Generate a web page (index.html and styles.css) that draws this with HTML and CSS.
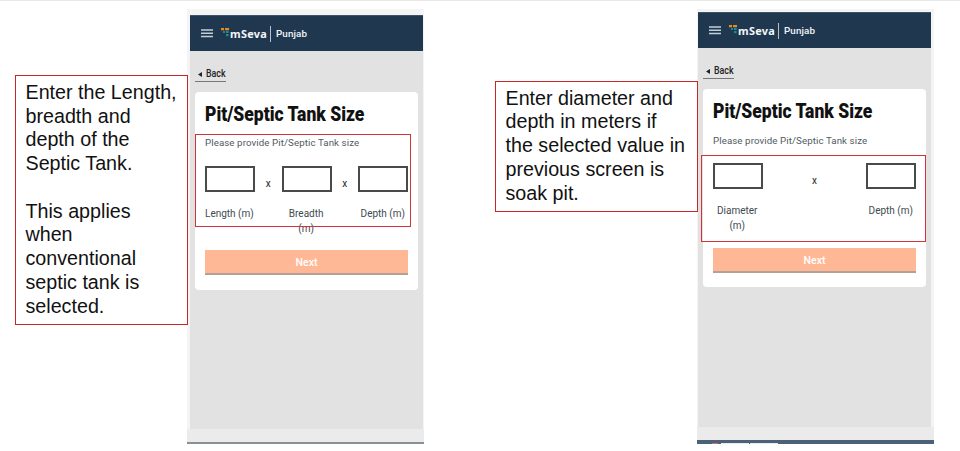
FILE: index.html
```html
<!DOCTYPE html>
<html lang="en">
<head>
<meta charset="utf-8">
<title>Pit/Septic Tank Size</title>
<link rel="stylesheet" href="styles.css">
</head>
<body>
<main class="board">
  <aside class="note note-tank">
    <p>Enter the Length,<br>breadth and<br>depth of the<br>Septic Tank.</p>
    <p>This applies<br>when<br>conventional<br>septic tank is<br>selected.</p>
  </aside>
  <section class="phone phone-tank">
    <header class="bar">
      <svg class="menu" viewBox="0 0 12 9"><path d="M0 1h12M0 4.3h12M0 7.6h12"/></svg>
      <svg class="mark" viewBox="0 0 9 9"><path fill="#e88b16" d="M0 0h3v2.2H0zM4 0h4v2.2H4z"/><path fill="#2386a0" d="M2 3h2v2H2zM5 3h2.6v2H5z"/><path fill="#16956a" d="M5 6h2.6v2.2H5z"/></svg>
      <span class="brand">mSeva</span><span class="state">Punjab</span>
    </header>
    <div class="screen">
      <a class="back"><svg viewBox="0 0 4 5"><path d="M4 0v5L0 2.5z"/></svg><span>Back</span></a>
      <div class="card">
        <h1><span>Pit/Septic Tank Size</span></h1>
        <p class="hint">Please provide Pit/Septic Tank size</p>
        <div class="inputs"><i class="field"></i><b>x</b><i class="field"></i><b>x</b><i class="field"></i></div>
        <div class="labels"><span>Length (m)</span><span>Breadth<br>(m)</span><span>Depth (m)</span></div>
        <div class="next">Next</div>
        <div class="focus"></div>
      </div>
    </div>
    <footer class="base"></footer>
  </section>
  <aside class="note note-pit">
    <p>Enter diameter and<br>depth in meters if<br>the selected value in<br>previous screen is<br>soak pit.</p>
  </aside>
  <section class="phone phone-pit">
    <header class="bar">
      <svg class="menu" viewBox="0 0 12 9"><path d="M0 1h12M0 4.3h12M0 7.6h12"/></svg>
      <svg class="mark" viewBox="0 0 9 9"><path fill="#e88b16" d="M0 0h3v2.2H0zM4 0h4v2.2H4z"/><path fill="#2386a0" d="M2 3h2v2H2zM5 3h2.6v2H5z"/><path fill="#16956a" d="M5 6h2.6v2.2H5z"/></svg>
      <span class="brand">mSeva</span><span class="state">Punjab</span>
    </header>
    <div class="screen">
      <a class="back"><svg viewBox="0 0 4 5"><path d="M4 0v5L0 2.5z"/></svg><span>Back</span></a>
      <div class="card">
        <h1><span>Pit/Septic Tank Size</span></h1>
        <p class="hint">Please provide Pit/Septic Tank size</p>
        <div class="inputs"><i class="field"></i><b>x</b><i class="field"></i></div>
        <div class="labels"><span>Diameter<br>(m)</span><span>Depth (m)</span></div>
        <div class="next">Next</div>
        <div class="focus"></div>
      </div>
    </div>
    <footer class="base"><i class="dot"></i><i class="tab"></i><i class="tab"></i></footer>
  </section>
</main>
</body>
</html>
```

FILE: styles.css
```css
* { box-sizing: border-box; }
body { margin: 0; background: #fff; font-family: Roboto, sans-serif; overflow: hidden; }
p, h1 { margin: 0; }
.board { display: flex; align-items: flex-start; height: 451px; padding-left: 15px; border-top: 1px solid #e9e9e9; }

.note { position: relative; z-index: 1; border: 1px solid #c62828; padding-left: 9.5px; font: 19.7px/23.75px "Liberation Sans", Arial, sans-serif; color: #111; white-space: nowrap; flex: none; }
.note p + p { margin-top: 23.75px; }
.note-tank { width: 173px; height: 250px; margin-top: 74px; padding-top: 4.8px; }
.note-pit { width: 203px; height: 131px; margin: 80px 0 0 71px; padding-top: 4.5px; }

.phone { flex: none; width: 237px; background: #f4f4f4; display: flex; flex-direction: column; }
.phone-tank { height: 435px; margin: 8px 0 0 -1px; padding-top: 6px; }
.phone-pit { height: 435px; margin: 8px 0 0 -1px; padding-top: 3px; }
.bar { width: 233px; height: 36px; margin-left: 3px; background: #1f3850; border-top: 1px solid #3c5369; display: flex; align-items: center; flex: none; color: #f3f6f8; }
.menu { width: 12px; height: 9px; margin-left: 11px; }
.menu path { stroke: #c4ced6; stroke-width: 1.5; }
.mark { width: 9px; height: 9px; margin: -3px 0 0 8px; }
.brand { font: 700 10.9px/16px "Noto Sans", sans-serif; width: 41px; border-right: 1px solid #b4c0ca; letter-spacing: .3px; }
.state { font: 500 9.8px/16px Roboto, sans-serif; margin-left: 5px; letter-spacing: .1px; }
.screen { width: 233px; margin-left: 3px; padding: 16px 5px 0; flex: 1; background: #e2e2e2; display: flex; flex-direction: column; align-items: flex-start; }
.phone-pit .bar, .phone-pit .screen { margin-left: 1px; }

.back { display: flex; align-items: center; height: 15px; width: 31px; padding-left: 3px; border-bottom: 1px solid #777; font: 500 10px/14px Roboto, sans-serif; color: #222; }
.back svg { width: 4px; height: 5px; margin-right: 4px; fill: #222; flex: none; }
.back span { transform: scaleX(.88); transform-origin: left; }

.card { position: relative; width: 223px; height: 198px; margin-top: 10px; padding: 11px 10px 0; background: #fff; border-radius: 4px; }
h1 { height: 22px; font: 900 20px/22px Roboto, sans-serif; color: #111; white-space: nowrap; }
h1 span { display: inline-block; transform: scaleX(.875); transform-origin: left; }
.hint { margin-top: 12px; font-size: 9.7px; line-height: 14px; color: #505a5f; letter-spacing: .1px; white-space: nowrap; }
.inputs { display: flex; justify-content: space-between; align-items: center; margin-top: 15px; height: 26px; }
.field { width: 50px; height: 26px; border: 2px solid #4a4a4a; }
.inputs b { font: 400 10px/12px Roboto, sans-serif; color: #222; padding-top: 10px; }
.labels { display: flex; justify-content: space-between; height: 36px; margin-top: 14px; font-size: 10px; line-height: 15px; color: #404b50; text-align: center; white-space: nowrap; }
.next { margin-top: 8px; height: 25px; background: #ffb896; border-bottom: 2px solid #b6a096; color: #fff; font: 500 10.5px/25px Roboto, sans-serif; text-align: center; }
.focus { position: absolute; border: 1px solid #d13438; }
.phone-tank .hint { margin-top: 11px; }
.phone-tank .inputs { margin-top: 16px; }
.phone-tank .focus { left: 0; top: 42px; width: 216px; height: 93px; }
.phone-pit .focus { left: -2px; top: 66px; width: 225px; height: 87px; }
.phone-tank .labels span:last-child { margin-right: 3px; }
.phone-tank .labels span:nth-child(2) { margin-left: -2px; }
.phone-pit .labels { padding: 0 3px 0 4px; }
.phone-pit .next { margin-top: 9px; }

.base { flex: none; height: 15px; background: #ebebeb; border-bottom: 2px solid #87919a; }
.phone-pit .base { height: 17px; border-bottom: 4px solid #4a6177; position: relative; }
.dot, .tab { position: absolute; top: 16px; height: 1px; }
.dot { left: 15px; width: 6px; background: #d86a6a; }
.tab { left: 24px; width: 28px; background: #e6ebef; }
.tab + .tab { left: 53px; }
```
